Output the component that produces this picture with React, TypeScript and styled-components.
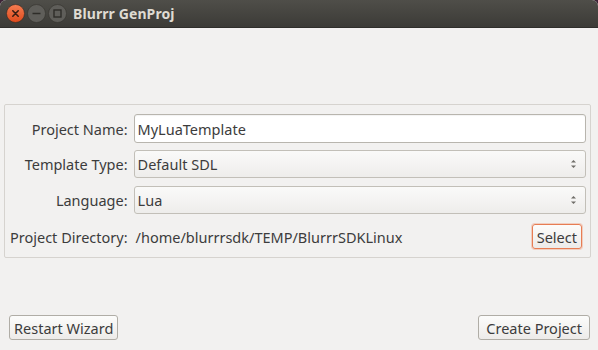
import styled, { createGlobalStyle } from 'styled-components';

const Global = createGlobalStyle`
  html, body {
    margin: 0;
    padding: 0;
    background: #3d2437;
  }
  body {
    font-family: "Noto Sans", "Open Sans", sans-serif;
  }
`;

const Window = styled.div`
  width: 598px;
  height: 350px;
  display: flex;
  flex-direction: column;
  background: #f2f1f0;
  border-radius: 6px 6px 0 0;
  overflow: hidden;
`;

const TitleBar = styled.div`
  height: 28px;
  flex: none;
  display: flex;
  align-items: center;
  padding-left: 6px;
  background: linear-gradient(#4f4e49, #3c3b37);
  border-bottom: 1px solid #2f2e2b;
  box-sizing: border-box;
`;

const Controls = styled.div`
  display: flex;
  gap: 2px;
  align-items: center;
`;

const TitleText = styled.div`
  margin-left: 6px;
  color: #dfdbd2;
  font-weight: 700;
  font-size: 14px;
  letter-spacing: 0.1px;
`;

const Content = styled.div`
  flex: 1;
  display: flex;
  flex-direction: column;
  padding: 76px 7px 10px 4px;
  color: #3c3c3c;
  font-size: 14.5px;
`;

const Panel = styled.div`
  border: 1px solid #d6d3cf;
  border-radius: 2px;
  padding: 9px 4px 8px 5px;
  display: grid;
  grid-template-columns: auto 1fr;
  column-gap: 6px;
  align-items: center;
`;

const Label = styled.div<{ $mt?: number }>`
  text-align: right;
  white-space: nowrap;
  margin-top: ${p => p.$mt ?? 0}px;
`;

const Field = styled.div<{ $mt?: number }>`
  margin-top: ${p => p.$mt ?? 0}px;
`;

const Entry = styled.div`
  height: 29px;
  box-sizing: border-box;
  border: 1px solid #b8b5ae;
  border-radius: 3px;
  background: #fff;
  display: flex;
  align-items: center;
  padding-left: 3px;
  box-shadow: inset 0 1px 1px rgba(0, 0, 0, 0.05);
`;

const Combo = styled.div`
  height: 28px;
  box-sizing: border-box;
  border: 1px solid #c2bfb8;
  border-radius: 3px;
  background: linear-gradient(#fafaf9, #eeedeb);
  display: flex;
  align-items: center;
  justify-content: space-between;
  padding: 0 8px 0 3px;
`;

const DirRow = styled.div<{ $mt?: number }>`
  display: flex;
  align-items: center;
  justify-content: space-between;
  margin-top: ${p => p.$mt ?? 0}px;
  padding-left: 2px;
  padding-right: 4px;
`;

const Button = styled.button<{ $focus?: boolean; $pad?: number }>`
  font: inherit;
  color: #3c3c3c;
  height: 25px;
  padding: 0 ${p => p.$pad ?? 4}px;
  box-sizing: border-box;
  border-radius: 3px;
  border: 1px solid ${p => (p.$focus ? '#e77d54' : '#b0ada6')};
  box-shadow: ${p => (p.$focus ? '0 0 0 1px rgba(240, 140, 100, 0.35)' : 'none')};
  background: linear-gradient(#fcfcfb, #edebe9);
  display: flex;
  align-items: center;
`;

const Spacer = styled.div`
  flex: 1;
`;

const ButtonRow = styled.div`
  display: flex;
  justify-content: space-between;
  padding: 0 1px 0 5px;
`;

const Arrows = () => (
  <svg width="7" height="10" viewBox="0 0 7 10">
    <path d="M3.5 1 L6 3.5 L1 3.5 Z" fill="#6e6c67" />
    <path d="M3.5 9 L6 6.5 L1 6.5 Z" fill="#6e6c67" />
  </svg>
);

const CloseBtn = () => (
  <svg width="19" height="19" viewBox="0 0 19 19">
    <defs>
      <linearGradient id="cg" x1="0" y1="0" x2="0" y2="1">
        <stop offset="0" stopColor="#f47d52" />
        <stop offset="1" stopColor="#df4a1c" />
      </linearGradient>
    </defs>
    <circle cx="9.5" cy="9.5" r="9" fill="url(#cg)" stroke="#3a2a22" strokeWidth="0.6" />
    <path d="M6.8 6.8 L12.2 12.2 M12.2 6.8 L6.8 12.2" stroke="#3b1d12" strokeWidth="1.6" strokeLinecap="round" />
  </svg>
);

const MinBtn = () => (
  <svg width="19" height="19" viewBox="0 0 19 19">
    <circle cx="9.5" cy="9.5" r="9" fill="#5f5e5a" stroke="#35342f" strokeWidth="0.6" />
    <path d="M5.5 9.5 L13.5 9.5" stroke="#2e2d29" strokeWidth="1.6" />
  </svg>
);

const MaxBtn = () => (
  <svg width="19" height="19" viewBox="0 0 19 19">
    <circle cx="9.5" cy="9.5" r="9" fill="#5f5e5a" stroke="#35342f" strokeWidth="0.6" />
    <rect x="6" y="6" width="7" height="7" fill="none" stroke="#2e2d29" strokeWidth="1.4" />
  </svg>
);

export default function App() {
  return (
    <>
      <Global />
      <Window>
        <TitleBar>
          <Controls>
            <CloseBtn />
            <MinBtn />
            <MaxBtn />
          </Controls>
          <TitleText>Blurrr GenProj</TitleText>
        </TitleBar>
        <Content>
          <Panel>
            <Label>Project Name:</Label>
            <Field>
              <Entry>MyLuaTemplate</Entry>
            </Field>
            <Label $mt={7}>Template Type:</Label>
            <Field $mt={7}>
              <Combo>
                Default SDL
                <Arrows />
              </Combo>
            </Field>
            <Label $mt={8}>Language:</Label>
            <Field $mt={8}>
              <Combo>
                Lua
                <Arrows />
              </Combo>
            </Field>
            <Label $mt={10}>Project Directory:</Label>
            <DirRow $mt={10}>
              <span>/home/blurrrsdk/TEMP/BlurrrSDKLinux</span>
              <Button $focus>Select</Button>
            </DirRow>
          </Panel>
          <Spacer />
          <ButtonRow>
            <Button>Restart Wizard</Button>
            <Button $pad={7}>Create Project</Button>
          </ButtonRow>
        </Content>
      </Window>
    </>
  );
}
